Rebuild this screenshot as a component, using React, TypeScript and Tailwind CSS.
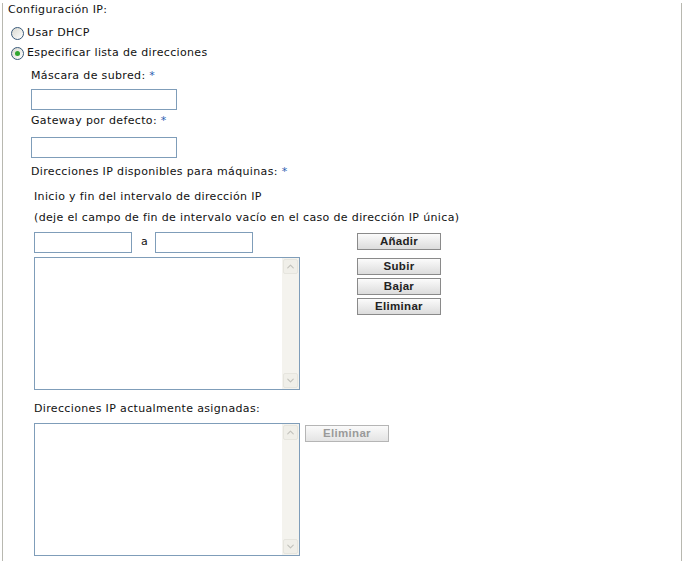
import { ChevronUp, ChevronDown } from "lucide-react";

function Radio({ checked }: { checked?: boolean }) {
  return (
    <span className="relative inline-flex h-[13px] w-[13px] items-center justify-center rounded-full border border-[#3a5a7a] bg-gradient-to-br from-[#d8d8d0] to-white">
      {checked && <span className="h-[5px] w-[5px] rounded-full bg-[#2fa52f]" />}
    </span>
  );
}

function Field({ className = "" }: { className?: string }) {
  return <input className={`h-[21px] border border-[#7f9db9] bg-white px-1 outline-none ${className}`} />;
}

function Btn({ label, disabled }: { label: string; disabled?: boolean }) {
  return (
    <button
      type="button"
      disabled={disabled}
      className={`flex h-[17px] w-[84px] items-center justify-center border bg-gradient-to-b font-['Liberation_Sans'] text-[11.5px] font-bold leading-none tracking-[0.3px] ${
        disabled
          ? "border-[#b5b5b5] from-[#fafafa] to-[#e4e4e4] text-[#9a9a9a]"
          : "border-[#8a8a8a] from-[#fbfbfb] to-[#dcdcdc] text-[#222]"
      }`}
    >
      {label}
    </button>
  );
}

function ListBox() {
  return (
    <div className="flex h-[133px] w-[266px] border border-[#7f9db9] bg-white">
      <div className="flex-1" />
      <div className="flex w-[17px] flex-col justify-between bg-[#f4f3ee] p-[1px]">
        <div className="flex h-[15px] items-center justify-center rounded-[2px] border border-[#e6e5de] bg-[#f0efe9] text-[#c2c2bc]">
          <ChevronUp size={11} strokeWidth={2.5} />
        </div>
        <div className="flex h-[15px] items-center justify-center rounded-[2px] border border-[#e6e5de] bg-[#f0efe9] text-[#c2c2bc]">
          <ChevronDown size={11} strokeWidth={2.5} />
        </div>
      </div>
    </div>
  );
}

function Label({ text, required, className = "" }: { text: string; required?: boolean; className?: string }) {
  return (
    <div className={`h-[14px] leading-[14px] ${className}`}>
      {text}
      {required && <span className="text-[#2a5db0]"> *</span>}
    </div>
  );
}

export default function App() {
  return (
    <div className="h-[561px] w-[685px] overflow-hidden bg-white font-['DejaVu_Sans'] text-[11px] tracking-[0.35px] text-[#111]">
      <div className="ml-[2px] h-full w-[680px] border-x border-[#b8b8b0] pl-[5px]">
        <div className="mt-[3px] h-[14px] leading-[14px]">Configuración IP:</div>

        <div className="ml-[3px] mt-[6px] flex h-[20px] items-center gap-[3px]">
          <Radio />
          <span>Usar DHCP</span>
        </div>
        <div className="ml-[3px] flex h-[20px] items-center gap-[3px]">
          <Radio checked />
          <span>Especificar lista de direcciones</span>
        </div>

        <div className="pl-[23px]">
          <Label text="Máscara de subred:" required className="mt-[6px]" />
          <Field className="mt-[6px] w-[146px]" />

          <Label text="Gateway por defecto:" required className="mt-[4px]" />
          <Field className="mt-[9px] w-[146px]" />

          <Label text="Direcciones IP disponibles para máquinas:" required className="mt-[7px]" />

          <div className="pl-[3px]">
            <Label text="Inicio y fin del intervalo de dirección IP" className="mt-[11px]" />
            <Label text="(deje el campo de fin de intervalo vacío en el caso de dirección IP única)" className="mt-[7px]" />

            <div className="mt-[7px] flex h-[20px] items-start">
              <div className="flex w-[323px] items-center">
                <Field className="h-[20px] w-[98px]" />
                <span className="ml-[9px] w-[14px]">a</span>
                <Field className="h-[20px] w-[98px]" />
              </div>
              <div className="mt-[1px]">
                <Btn label="Añadir" />
              </div>
            </div>

            <div className="mt-[5px] flex">
              <ListBox />
              <div className="ml-[57px] mt-[1px] flex flex-col gap-[3px]">
                <Btn label="Subir" />
                <Btn label="Bajar" />
                <Btn label="Eliminar" />
              </div>
            </div>

            <Label text="Direcciones IP actualmente asignadas:" className="mt-[12px]" />

            <div className="mt-[7px] flex">
              <ListBox />
              <div className="ml-[5px] mt-[2px]">
                <Btn label="Eliminar" disabled />
              </div>
            </div>
          </div>
        </div>
      </div>
    </div>
  );
}
